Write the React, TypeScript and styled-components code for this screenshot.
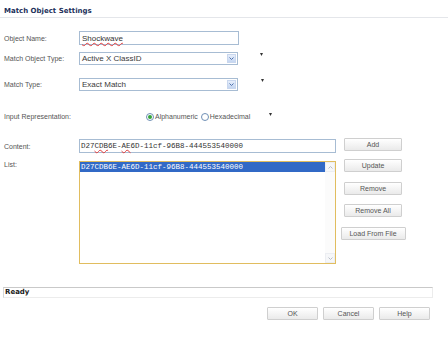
import React from 'react';
import styled, { createGlobalStyle } from 'styled-components';

const GlobalStyle = createGlobalStyle`
  html, body {
    margin: 0;
    padding: 0;
    background: #ffffff;
  }
  body {
    font-family: "Liberation Sans", Arial, sans-serif;
    color: #444;
  }
`;

const Page = styled.div`
  width: 448px;
  height: 337px;
  background: #fff;
  overflow: hidden;
`;

const Header = styled.div`
  padding: 6px 4px 0;
  height: 11px;
  line-height: 10px;
  border-bottom: 1px solid #e4e6ea;
`;

const Title = styled.h1`
  margin: 0;
  font-family: "DejaVu Sans", Verdana, sans-serif;
  font-size: 7px;
  font-weight: bold;
  color: #22305a;
`;

const Row = styled.div<{ $top: number; $h: number }>`
  display: flex;
  align-items: center;
  margin-top: ${(p) => p.$top}px;
  height: ${(p) => p.$h}px;
  padding-left: 4px;
`;

const Label = styled.label`
  width: 75px;
  flex: none;
  font-size: 7px;
  color: #555;
`;

const Field = styled.div<{ $w: number; $mono?: boolean }>`
  box-sizing: border-box;
  width: ${(p) => p.$w}px;
  height: 100%;
  border: 1px solid #a7bcd3;
  background: #fff;
  display: flex;
  align-items: center;
  padding-left: ${(p) => (p.$mono ? 1 : 2)}px;
  font-family: ${(p) => (p.$mono ? '"Liberation Mono", "Courier New", monospace' : '"Liberation Sans", Arial, sans-serif')};
  font-size: ${(p) => (p.$mono ? 7.5 : 8)}px;
  color: #333;
  white-space: nowrap;
`;

const Spell = styled.span`
  text-decoration: underline wavy #e23b3b;
  text-decoration-thickness: 1px;
  text-underline-offset: 1px;
`;

const Select = styled.div`
  box-sizing: border-box;
  width: 159px;
  height: 100%;
  border: 1px solid #a7bcd3;
  background: #fff;
  display: flex;
  align-items: center;
  font-size: 8px;
  color: #3a3a3a;
`;

const SelectText = styled.span`
  flex: 1;
  padding-left: 2px;
`;

const SelectArrow = styled.span`
  width: 9px;
  height: 9px;
  margin-right: 1px;
  background: linear-gradient(#e6eefb, #c5d6f1);
  border: 1px solid #c9d7ee;
  box-sizing: border-box;
  display: flex;
  align-items: center;
  justify-content: center;
`;

const MarkerWrap = styled.span<{ $left: number; $top: number }>`
  align-self: flex-start;
  display: flex;
  margin-left: ${(p) => p.$left}px;
  margin-top: ${(p) => p.$top}px;
`;

const Marker = ({ left, top = 1 }: { left: number; top?: number }) => (
  <MarkerWrap $left={left} $top={top}>
    <svg width="3" height="3" viewBox="0 0 3 3">
      <path d="M0 0 H3 L1.5 3 Z" fill="#333" />
    </svg>
  </MarkerWrap>
);

const RadioGroup = styled.div`
  display: flex;
  align-items: center;
  margin-left: 67px;
  font-size: 7px;
  color: #555;
`;

const Radio = styled.span<{ $checked?: boolean }>`
  box-sizing: border-box;
  width: 8px;
  height: 8px;
  border-radius: 50%;
  border: 1px solid #6f8fb5;
  background: #fff;
  display: inline-flex;
  align-items: center;
  justify-content: center;
  margin-right: 1px;
  &::after {
    content: '';
    width: 4px;
    height: 4px;
    border-radius: 50%;
    background: ${(p) => (p.$checked ? '#33a43a' : 'transparent')};
  }
`;

const RadioLabel = styled.span`
  margin-right: 3px;
`;

const ListArea = styled.div`
  display: flex;
  margin-top: 16px;
`;

const LeftCol = styled.div`
  width: 336px;
  flex: none;
  padding-top: 1px;
`;

const ListRow = styled.div`
  display: flex;
  padding-left: 4px;
  margin-top: 8px;
  height: 103px;
`;

const ListBox = styled.div`
  box-sizing: border-box;
  width: 257px;
  height: 100%;
  border: 1px solid #e1bd5f;
  background: #fff;
  display: flex;
`;

const ListItems = styled.div`
  flex: 1;
`;

const ListItem = styled.div<{ $selected?: boolean }>`
  height: 10px;
  line-height: 10px;
  padding-left: 1px;
  font-family: "Liberation Mono", "Courier New", monospace;
  font-size: 7.5px;
  background: ${(p) => (p.$selected ? '#3169c6' : 'transparent')};
  color: ${(p) => (p.$selected ? '#fff' : '#333')};
`;

const Scrollbar = styled.div`
  width: 10px;
  display: flex;
  flex-direction: column;
  justify-content: space-between;
  background: #fbfbfb;
`;

const ScrollBtn = styled.span`
  box-sizing: border-box;
  width: 10px;
  height: 10px;
  border: 1px solid #eceef2;
  background: #f6f7f9;
  display: flex;
  align-items: center;
  justify-content: center;
`;

const RightCol = styled.div`
  width: 74px;
  display: flex;
  flex-direction: column;
  align-items: center;
`;

const Button = styled.button<{ $w: number; $top?: number }>`
  box-sizing: border-box;
  width: ${(p) => p.$w}px;
  height: 13px;
  margin: ${(p) => p.$top ?? 0}px 0 0;
  padding: 0;
  border: 1px solid #cfcfcf;
  border-radius: 1px;
  background: linear-gradient(#ffffff, #eaeaea);
  font-family: "Liberation Sans", Arial, sans-serif;
  font-size: 7px;
  color: #555;
  line-height: 11px;
  cursor: pointer;
`;

const StatusBar = styled.div`
  box-sizing: border-box;
  margin: 23px 15px 0 3px;
  height: 11px;
  border-top: 1px solid #c9c9c9;
  border-left: 1px solid #d6d6d6;
  border-right: 1px solid #ececec;
  border-bottom: 1px solid #ececec;
  padding-left: 1px;
  font-family: "DejaVu Sans", Verdana, sans-serif;
  font-size: 7px;
  font-weight: bold;
  line-height: 9px;
  color: #1a1a1a;
`;

const Footer = styled.div`
  display: flex;
  justify-content: flex-end;
  gap: 5px;
  margin-top: 9px;
  padding-right: 18px;
`;

const Chevron = ({ up = false, color = '#4f72ad' }: { up?: boolean; color?: string }) => (
  <svg width="5" height="3" viewBox="0 0 5 3">
    <path d={up ? 'M0.5 2.5 L2.5 0.5 L4.5 2.5' : 'M0.5 0.5 L2.5 2.5 L4.5 0.5'} fill="none" stroke={color} strokeWidth="1" />
  </svg>
);

const App: React.FC = () => {
  return (
    <Page>
      <GlobalStyle />
      <Header>
        <Title>Match Object Settings</Title>
      </Header>

      <Row $top={13} $h={14}>
        <Label>Object Name:</Label>
        <Field $w={160}>
          <Spell>Shockwave</Spell>
        </Field>
      </Row>

      <Row $top={7} $h={13}>
        <Label>Match Object Type:</Label>
        <Select>
          <SelectText>Active X ClassID</SelectText>
          <SelectArrow>
            <Chevron />
          </SelectArrow>
        </Select>
        <Marker left={22} />
      </Row>

      <Row $top={13} $h={13}>
        <Label>Match Type:</Label>
        <Select>
          <SelectText>Exact Match</SelectText>
          <SelectArrow>
            <Chevron />
          </SelectArrow>
        </Select>
        <Marker left={23} />
      </Row>

      <Row $top={20} $h={11}>
        <Label>Input Representation:</Label>
        <RadioGroup>
          <Radio $checked />
          <RadioLabel>Alphanumeric</RadioLabel>
          <Radio />
          <RadioLabel>Hexadecimal</RadioLabel>
        </RadioGroup>
        <Marker left={16} top={2} />
      </Row>

      <ListArea>
        <LeftCol>
          <Row $top={0} $h={14}>
            <Label>Content:</Label>
            <Field $w={257} $mono>
              D27<Spell>CDB</Spell>6E-<Spell>AE</Spell>6D-11cf-96B8-444553540000
            </Field>
          </Row>
          <ListRow>
            <Label>List:</Label>
            <ListBox>
              <ListItems>
                <ListItem $selected>D27CDB6E-AE6D-11cf-96B8-444553540000</ListItem>
              </ListItems>
              <Scrollbar>
                <ScrollBtn>
                  <Chevron up color="#b9bec8" />
                </ScrollBtn>
                <ScrollBtn>
                  <Chevron color="#b9bec8" />
                </ScrollBtn>
              </Scrollbar>
            </ListBox>
          </ListRow>
        </LeftCol>
        <RightCol>
          <Button $w={58}>Add</Button>
          <Button $w={58} $top={8}>Update</Button>
          <Button $w={58} $top={10}>Remove</Button>
          <Button $w={58} $top={9}>Remove All</Button>
          <Button $w={65} $top={10}>Load From File</Button>
        </RightCol>
      </ListArea>

      <StatusBar>Ready</StatusBar>

      <Footer>
        <Button $w={51}>OK</Button>
        <Button $w={51}>Cancel</Button>
        <Button $w={51}>Help</Button>
      </Footer>
    </Page>
  );
};

export default App;
